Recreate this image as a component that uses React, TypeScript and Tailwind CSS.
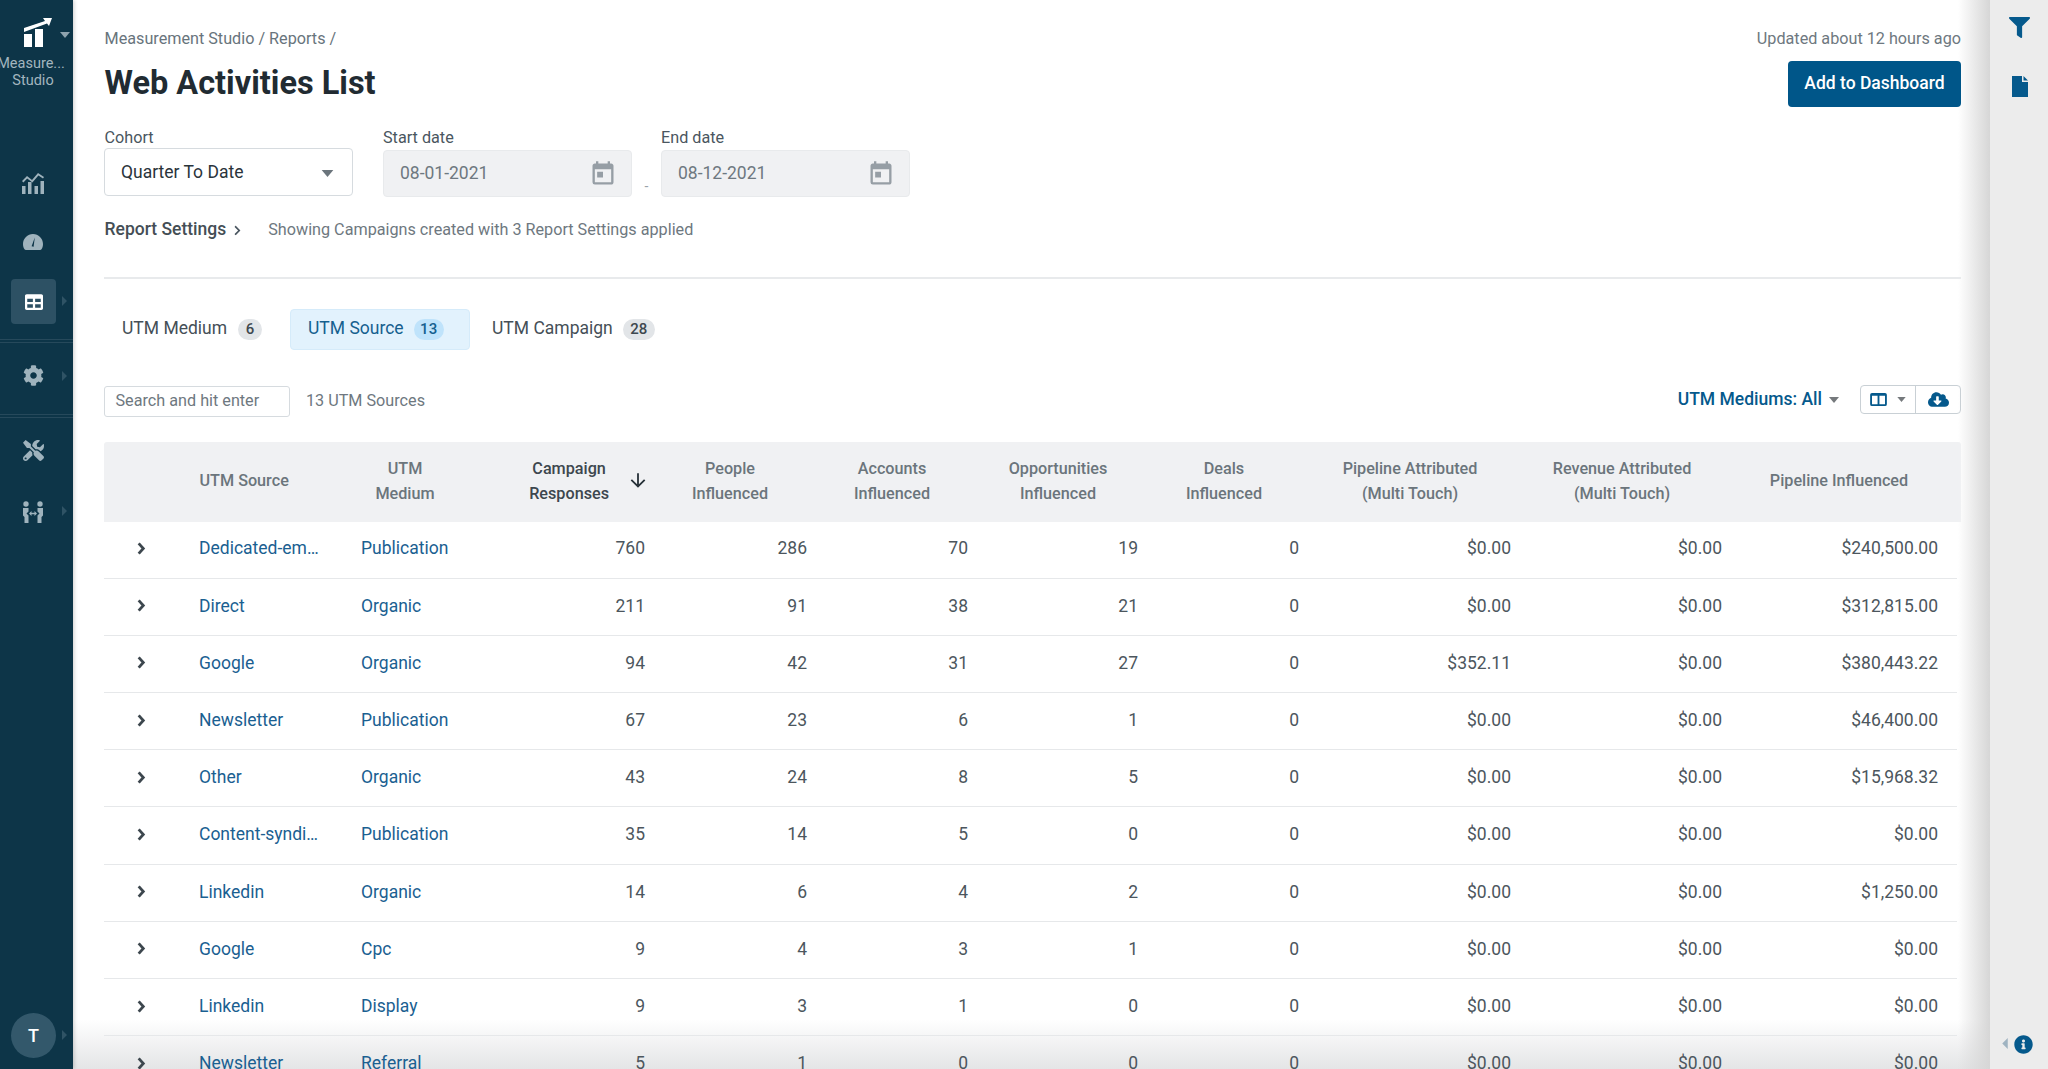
import React from "react";
import { FaCog, FaTools, FaFilter, FaCloudDownloadAlt, FaInfoCircle, FaChevronRight, FaTable } from "react-icons/fa";
import { MdToday, MdArrowDownward } from "react-icons/md";

const rows = [
  ["Dedicated-em…", "Publication", "760", "286", "70", "19", "0", "$0.00", "$0.00", "$240,500.00"],
  ["Direct", "Organic", "211", "91", "38", "21", "0", "$0.00", "$0.00", "$312,815.00"],
  ["Google", "Organic", "94", "42", "31", "27", "0", "$352.11", "$0.00", "$380,443.22"],
  ["Newsletter", "Publication", "67", "23", "6", "1", "0", "$0.00", "$0.00", "$46,400.00"],
  ["Other", "Organic", "43", "24", "8", "5", "0", "$0.00", "$0.00", "$15,968.32"],
  ["Content-syndi…", "Publication", "35", "14", "5", "0", "0", "$0.00", "$0.00", "$0.00"],
  ["Linkedin", "Organic", "14", "6", "4", "2", "0", "$0.00", "$0.00", "$1,250.00"],
  ["Google", "Cpc", "9", "4", "3", "1", "0", "$0.00", "$0.00", "$0.00"],
  ["Linkedin", "Display", "9", "3", "1", "0", "0", "$0.00", "$0.00", "$0.00"],
  ["Newsletter", "Referral", "5", "1", "0", "0", "0", "$0.00", "$0.00", "$0.00"],
];

function Caret({ className }: { className: string }) {
  return (
    <svg viewBox="0 0 10 6" className={className} fill="currentColor">
      <path d="M0 0h10L5 6z" />
    </svg>
  );
}

function SideCaret({ className }: { className: string }) {
  return (
    <svg viewBox="0 0 6 12" className={className} fill="currentColor">
      <path d="M0 0l6 6-6 6z" />
    </svg>
  );
}

function Field({ label, value }: { label: string; value: string }) {
  return (
    <div className="w-[249px]">
      <div className="h-[20px] text-[16.2px] leading-[20px] text-[#4a5660]">{label}</div>
      <div className="mt-[2px] flex h-[47px] items-center justify-between rounded-[4px] border border-[#e8eaec] bg-[#f0f1f3] pl-[16px] pr-[14px] text-[17.5px] text-[#6e7880]">
        <span>{value}</span>
        <MdToday className="h-[28px] w-[28px] text-[#969ea5]" />
      </div>
    </div>
  );
}

function Side({ y, children }: { y: string; children: React.ReactNode }) {
  return <div className={`absolute left-0 flex w-[66px] justify-center text-[#9fb3bd] ${y}`}>{children}</div>;
}

export default function App() {
  return (
    <div className="relative flex h-[1069px] w-[2048px] overflow-hidden bg-white font-[family-name:Roboto,sans-serif]">
      <aside className="relative z-20 h-full w-[73px] shrink-0 bg-[#0d3548] shadow-[1px_0_4px_rgba(0,0,0,0.2)]">
        <svg viewBox="0 0 30 30" className="absolute left-[22px] top-[17px] h-[30px] w-[30px]" fill="white">
          <path d="M2 11 L23 4 L21 1 L30 1 L27 9 L25 6.5 L2 15z" />
          <rect x="2" y="17" width="8" height="13" />
          <rect x="13" y="12" width="8" height="18" />
        </svg>
        <Caret className="absolute left-[60px] top-[32px] h-[6px] w-[10px] text-[#8ea3ae]" />
        <div className="absolute left-0 top-[55px] w-[66px] overflow-hidden whitespace-nowrap text-center text-[14.5px] leading-[17px] text-[#a3b6bf]">
          <div className="-ml-[4px]">Measure...</div>
          <div>Studio</div>
        </div>

        <Side y="top-[171px]">
          <svg viewBox="0 0 24 24" className="h-[24px] w-[24px]" fill="currentColor">
            <path d="M1 10l5-5 5 4 6-7 6 4-1 1.6-4.600-3L11.400 11.500 6.200 7.600 2.400 11.400z" />
            <rect x="1" y="15" width="3.500" height="8" />
            <rect x="7" y="11" width="3.500" height="12" />
            <rect x="13.500" y="15" width="3.500" height="8" />
            <rect x="19.500" y="10" width="3.500" height="13" />
          </svg>
        </Side>
        <Side y="top-[234px]">
          <svg viewBox="0 0 20 16" className="h-[16px] w-[20px]" fill="currentColor">
            <path d="M10 0C4.500 0 0 4.500 0 10c0 2 .6 4 1.500 5.200.3.500.8.800 1.400.800h14.200c.6 0 1.100-.3 1.400-.8C19.400 14 20 12 20 10 20 4.500 15.500 0 10 0z" />
            <path d="M11.800 3.500L8.600 12.200l2 .6z" fill="#0d3548" />
          </svg>
        </Side>
        <div className="absolute left-[11px] top-[279px] flex h-[45px] w-[45px] items-center justify-center rounded-[4px] bg-[#2d5164] text-white">
          <FaTable className="h-[18px] w-[18px]" />
        </div>
        <SideCaret className="absolute left-[62px] top-[296px] h-[10px] w-[5px] text-[#2f5365]" />
        <div className="absolute left-0 top-[339px] h-[4px] w-full border-y border-[#26495b]" />
        <Side y="top-[365px]"><FaCog className="h-[21px] w-[21px]" /></Side>
        <SideCaret className="absolute left-[62px] top-[371px] h-[10px] w-[5px] text-[#2f5365]" />
        <div className="absolute left-0 top-[414px] h-[4px] w-full border-y border-[#26495b]" />
        <Side y="top-[440px]"><FaTools className="h-[21px] w-[21px]" /></Side>
        <Side y="top-[500px]">
          <svg viewBox="0 0 24 24" className="h-[24px] w-[24px]" fill="currentColor">
            <circle cx="5" cy="4" r="2.700" />
            <circle cx="19" cy="4" r="2.700" />
            <path d="M2 8h5.500v3.500L5.500 13.500 7.500 15.500v7.500H3.500v-6L2 15.500zM22 8h-5.500v3.500l2 2-2 2v7.500h4v-6l1.500-1.500z" />
            <path d="M8 13.500l2.500-2.500v1.700h3V11l2.500 2.500-2.500 2.500v-1.700h-3V16z" />
          </svg>
        </Side>
        <SideCaret className="absolute left-[62px] top-[506px] h-[10px] w-[5px] text-[#2f5365]" />
        <div className="absolute left-[11px] top-[1013px] flex h-[45px] w-[45px] items-center justify-center rounded-full bg-[#33586b] text-[18px] font-medium text-white">T</div>
        <SideCaret className="absolute left-[62px] top-[1030px] h-[10px] w-[5px] text-[#2f5365]" />
      </aside>

      <main className="relative w-[1917px] shrink-0 pl-[31px] pr-[29px]">
        <div className="pointer-events-none absolute bottom-0 left-0 h-[50px] w-full bg-gradient-to-b from-transparent to-[#e4e5e6]" />
        <div className="pointer-events-none absolute right-0 top-0 h-full w-[32px] bg-gradient-to-r from-transparent to-[#d6d6d6]" />

        <div className="relative">
        <div className="flex h-[124px] justify-between pt-[28px]">
          <div className="pl-[0.5px]">
            <div className="mt-[1px] h-[20px] text-[16.2px] leading-[20px] text-[#68747c]">Measurement Studio / Reports /</div>
            <h1 className="mt-[15px] text-[32.5px] font-bold leading-[38px] text-[#212b32]">Web Activities List</h1>
          </div>
          <div className="flex flex-col items-end">
            <div className="h-[22px] text-[16.2px] leading-[22px] text-[#6e7880]">Updated about 12 hours ago</div>
            <button className="mt-[11px] h-[46px] w-[173px] rounded-[4px] bg-[#005689] pb-[1px] text-[17.5px] font-medium text-white">Add to Dashboard</button>
          </div>
        </div>

        <div className="flex h-[73px] items-start pt-[4px]">
          <div className="w-[249px]">
            <div className="h-[20px] pl-[0.5px] text-[16.2px] leading-[20px] text-[#4a5660]">Cohort</div>
            <div className="flex h-[48px] items-center justify-between rounded-[4px] border-[1.5px] border-[#d6dbdf] pl-[16px] pr-[18px] text-[17.5px] text-[#2a343b]">
              <span>Quarter To Date</span>
              <Caret className="mt-[2px] h-[7px] w-[13px] text-[#6b757c]" />
            </div>
          </div>
          <div className="ml-[30px]"><Field label="Start date" value="08-01-2021" /></div>
          <div className="flex w-[29px] justify-center pt-[48px] text-[14px] text-[#9aa3a9]">-</div>
          <Field label="End date" value="08-12-2021" />
        </div>

        <div className="mt-[22px] flex h-[22px] items-center pl-[0.5px]">
          <span className="-translate-y-[1px] text-[17.5px] font-medium text-[#444e55]">Report Settings</span>
          <FaChevronRight className="ml-[7px] h-[11px] w-[9px] text-[#4a5660]" />
          <span className="ml-[26px] text-[16.2px] text-[#6e7880]">Showing Campaigns created with 3 Report Settings applied</span>
        </div>

        <div className="mt-[36px] h-[1.500px] bg-[#e8eaec]" />

        <div className="mt-[30px] flex h-[41px] items-center">
          <div className="flex h-full w-[186px] items-center pl-[18px] text-[17.500px] text-[#454f57]">
            <span className="-translate-y-[1px]">UTM Medium</span>
            <span className="ml-[11px] flex h-[21px] w-[24px] items-center justify-center rounded-full bg-[#e2e5e8] text-[15px] font-medium text-[#3e484f]">6</span>
          </div>
          <div className="flex h-full w-[180px] items-center rounded-[4px] border border-[#d5ebfa] bg-[#e2f2fd] pl-[17px] text-[17.500px] text-[#15608f]">
            <span className="-translate-y-[1px]">UTM Source</span>
            <span className="ml-[10px] flex h-[21px] w-[30px] items-center justify-center rounded-full bg-[#bfe3fb] text-[15px] font-medium text-[#15608f]">13</span>
          </div>
          <div className="ml-[22px] flex h-full items-center text-[17.500px] text-[#454f57]">
            <span className="-translate-y-[1px]">UTM Campaign</span>
            <span className="ml-[10px] flex h-[21px] w-[32px] items-center justify-center rounded-full bg-[#e2e5e8] text-[15px] font-medium text-[#3e484f]">28</span>
          </div>
        </div>

        <div className="mt-[35px] flex h-[32px] items-center justify-between">
          <div className="flex translate-y-[1px] items-center">
            <div className="flex h-[31px] w-[186px] items-center rounded-[3px] border-[1.500px] border-[#d6dbdf] pl-[10.5px] text-[16.200px] text-[#6e7880]">Search and hit enter</div>
            <span className="ml-[16px] text-[16.200px] text-[#6e7880]">13 UTM Sources</span>
          </div>
          <div className="flex -translate-y-[1px] items-center">
            <span className="text-[17.500px] font-medium text-[#05598c]">UTM Mediums: All</span>
            <Caret className="ml-[6px] h-[6px] w-[12px] text-[#75797c]" />
            <div className="ml-[20px] flex h-[29px] w-[101px] items-center rounded-[4px] border-[1.500px] border-[#c9d0d5]">
              <div className="flex h-full w-[55px] items-center justify-center gap-[10px] border-r-[1.500px] border-[#c9d0d5]">
                <svg viewBox="0 0 18 14" className="h-[13px] w-[17px]" fill="none" stroke="#05598c" strokeWidth="2">
                  <rect x="1" y="1" width="16" height="12" rx="1" />
                  <path d="M9 1v12M1 2h16" />
                </svg>
                <Caret className="h-[5px] w-[9px] text-[#75797c]" />
              </div>
              <div className="flex flex-1 items-center justify-center">
                <FaCloudDownloadAlt className="h-[17px] w-[21px] text-[#05598c]" />
              </div>
            </div>
          </div>
        </div>

        <div className="mt-[25px] grid h-[80px] grid-cols-[95px_162px_90px_195px_168px_156px_176px_156px_216px_208px_226px_1fr] items-center rounded-t-[3px] bg-[#f0f1f3] text-center text-[16.200px] font-medium leading-[25px] text-[#6b757c]">
          <div />
          <div className="-translate-y-[1px] pl-[0.5px] text-left">UTM Source</div>
          <div className="-translate-y-[1.5px] -translate-x-[1px]">UTM<br />Medium</div>
          <div className="flex -translate-y-[1.5px] items-center justify-end text-[#3d474e]">
            <div>Campaign<br />Responses</div>
            <MdArrowDownward className="-mr-[3px] ml-[18px] h-[22px] w-[22px] text-[#2a343b]" />
          </div>
          <div className="-translate-y-[1.5px]">People<br />Influenced</div>
          <div className="-translate-y-[1.5px]">Accounts<br />Influenced</div>
          <div className="-translate-y-[1.5px]">Opportunities<br />Influenced</div>
          <div className="-translate-y-[1.5px]">Deals<br />Influenced</div>
          <div className="-translate-y-[1.5px]">Pipeline Attributed<br />(Multi Touch)</div>
          <div className="-translate-y-[1.5px]">Revenue Attributed<br />(Multi Touch)</div>
          <div className="-translate-y-[1px]">Pipeline Influenced</div>
          <div />
        </div>

        <div className="mr-[4px]">
          {rows.map((r, i) => (
            <div key={i} className="grid h-[57.200px] grid-cols-[95px_162px_90px_194px_162px_161px_170px_161px_212px_211px_216px_1fr] items-center border-b-[1.500px] border-[#e6e8ea] pb-[2px] text-right text-[17.500px] text-[#4c565d]">
              <div className="flex justify-start pl-[32px]">
                <svg viewBox="0 0 10 14" className="h-[13px] w-[10px]" fill="none" stroke="#3d474e" strokeWidth="3">
                  <path d="M2.500 1.500L7.500 7l-5 5.500" />
                </svg>
              </div>
              <div className="text-left text-[#1a6091]">{r[0]}</div>
              <div className="whitespace-nowrap text-left text-[#1a6091]">{r[1]}</div>
              {r.slice(2).map((c, j) => (
                <div key={j}>{c}</div>
              ))}
              <div />
            </div>
          ))}
        </div>
        </div>
      </main>

      <aside className="relative w-[58px] shrink-0 bg-[#ececec]">
        <FaFilter className="absolute left-[19px] top-[17px] h-[21px] w-[21px] text-[#05598c]" />
        <svg viewBox="0 0 16 21" className="absolute left-[22px] top-[76px] h-[21px] w-[16px]" fill="#05598c">
          <path d="M0 0h10v6h6v15H0zM11.500 0L16 4.500h-4.500z" />
        </svg>
        <SideCaret className="absolute left-[12px] top-[1038px] h-[11px] w-[6px] rotate-180 text-[#9fb3c1]" />
        <FaInfoCircle className="absolute left-[24px] top-[1035px] h-[19px] w-[19px] text-[#05598c]" />
      </aside>
    </div>
  );
}
